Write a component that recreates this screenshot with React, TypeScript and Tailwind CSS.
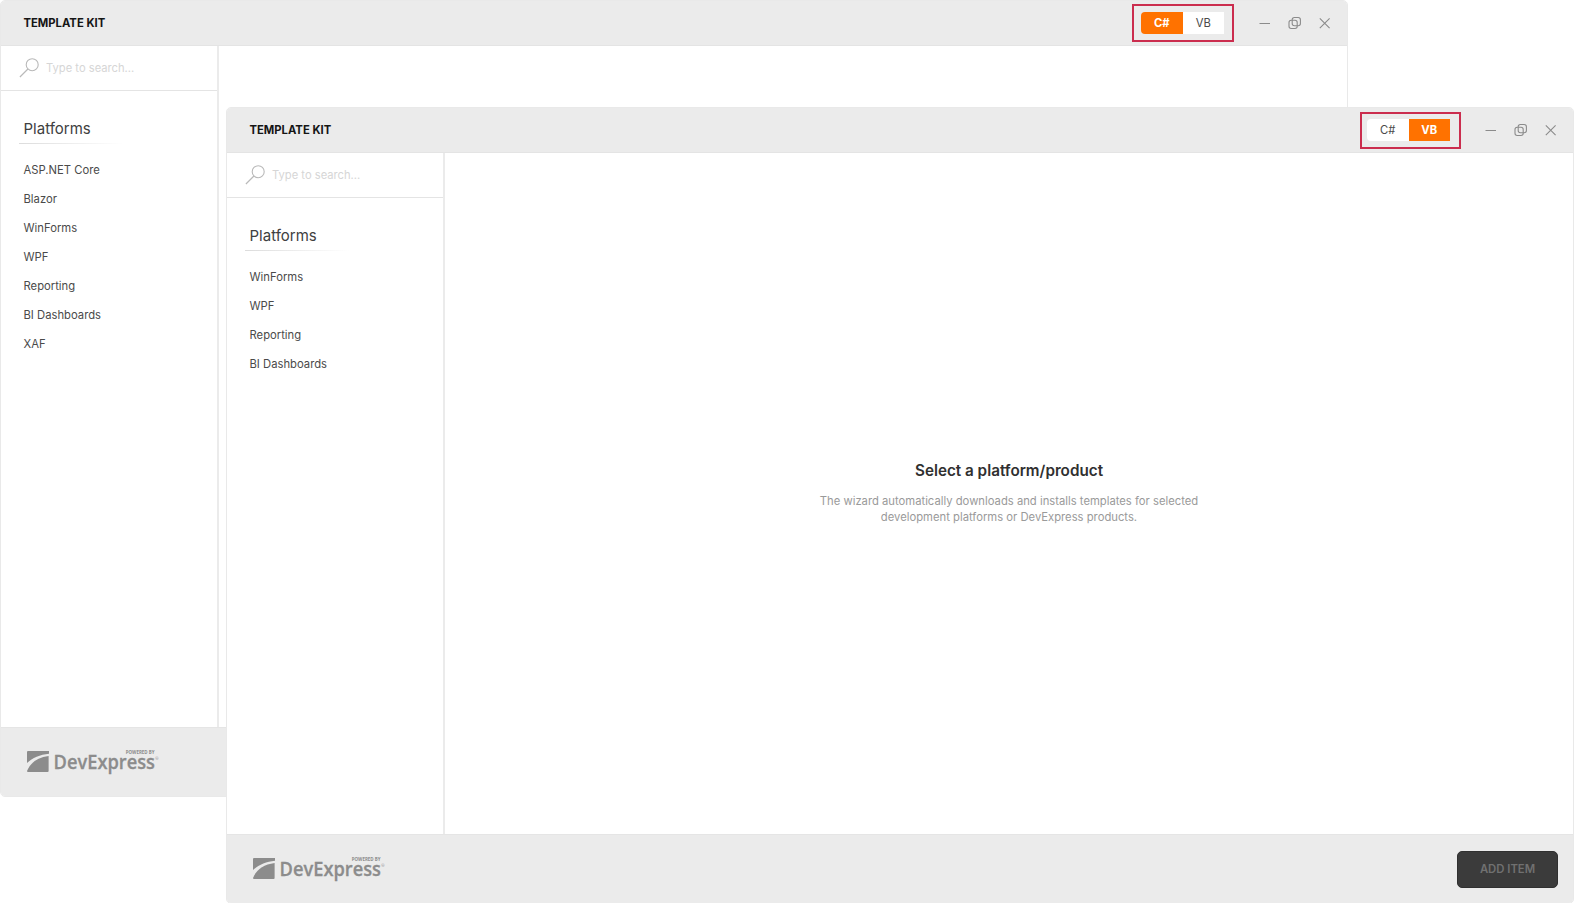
import { useState } from "react";

type Language = "C#" | "VB";

interface TemplateKitProps {
    initialLanguage: Language;
    platforms: string[];
    markClassName: string;
}

const SearchIcon = () => (
    <svg width="20" height="20" viewBox="0 0 20 20" fill="none" stroke="#b9b9b9" strokeWidth="1.1">
        <circle cx="13.2" cy="6.7" r="6" />
        <path d="M8.9 11L0.9 19" />
    </svg>
);

const WindowButtons = () => (
    <svg width="72" height="14" viewBox="0 0 72 14" fill="none" stroke="#8b8b8b" strokeWidth="1.1">
        <path d="M0.5 7.5H11" />
        <rect x="30" y="4.3" width="8.2" height="8.2" rx="2.2" />
        <rect x="33.2" y="1.5" width="8.2" height="8.2" rx="2.2" />
        <path d="M60.8 2.3L70.6 12.1M70.6 2.3L60.8 12.1" />
    </svg>
);

const Logo = () => (
    <svg width="140" height="32" viewBox="0 -3 140 32" fill="#8c8c8c">
        <path d="M1 2H22V4.8C13 5.6 5.5 9 0 14V3Q0 2 1 2Z" />
        <path d="M21.6 7V22Q21.6 23 20.6 23H1Q0 23 0 22C3.5 13.5 10.5 8.5 21.6 7Z" />
        <text x="26.6" y="20" fontFamily="'Open Sans', 'Noto Sans', sans-serif" fontSize="20" fontWeight="600" stroke="#8c8c8c" strokeWidth="0.3" textLength="101.4" lengthAdjust="spacingAndGlyphs">DevExpress</text>
        <text x="98.8" y="5.3" fontFamily="'Open Sans', 'Noto Sans', sans-serif" fontSize="5" fontWeight="700" textLength="28.7" lengthAdjust="spacingAndGlyphs">POWERED BY</text>
        <text x="128.2" y="10.5" fontFamily="'Open Sans', 'Noto Sans', sans-serif" fontSize="4">®</text>
    </svg>
);

const TemplateKit = ({ initialLanguage, platforms, markClassName }: TemplateKitProps) => {
    const [language, setLanguage] = useState<Language>(initialLanguage);

    return (
        <section className="flex h-[797px] w-[1348px] flex-col overflow-hidden rounded-[5px] border border-[#e9e9e9] bg-white">
            <header className="flex h-[45px] shrink-0 items-center border-b border-[#e4e4e4] bg-[#ebebeb] pl-[22.5px] pr-4">
                <h1 className="grow text-[11.25px] font-bold leading-[14px] text-[#151515]">TEMPLATE KIT</h1>
                <div className="relative mr-[35px] flex h-[22px] w-[83px]">
                    {(["C#", "VB"] as Language[]).map((item) => (
                        <button
                            key={item}
                            onClick={() => setLanguage(item)}
                            className={
                                "flex-1 text-[11.25px] leading-[20px] first:rounded-l-[4px] last:rounded-r-[4px] " +
                                (item === language ? "bg-[#ff7200] font-bold text-white" : "bg-white text-[#4a4a4a]")
                            }
                        >
                            {item}
                        </button>
                    ))}
                    <span className={"pointer-events-none absolute border-2 border-[#cb2d4e] " + markClassName} />
                </div>
                <WindowButtons />
            </header>

            <div className="flex min-h-0 grow">
                <aside className="w-[218px] shrink-0 border-r-2 border-[#ebebeb]">
                    <div className="flex h-[45px] items-center gap-[7px] border-b border-[#e4e4e4] pl-[18px]">
                        <SearchIcon />
                        <span className="text-[11.2px] text-[#d6d6d6]">Type to search...</span>
                    </div>
                    <h2 className="ml-[22.5px] mt-[26px] text-[15px] leading-6 text-[#404040]">Platforms</h2>
                    <div className="ml-[18px] mt-[2px] h-px w-[104px] bg-linear-to-r from-[#dcdcdc] to-white" />
                    <ul className="ml-[22.5px] mt-3">
                        {platforms.map((platform) => (
                            <li key={platform} className="h-[29px] text-[11.25px] leading-[29px] text-[#4a4a4a]">{platform}</li>
                        ))}
                    </ul>
                </aside>

                <main className="flex grow flex-col items-center pt-[308px]">
                    <h2 className="text-[15.25px] font-semibold leading-5 text-[#303030]">Select a platform/product</h2>
                    <p className="mt-[13px] w-[420px] text-center text-[11.25px] leading-[15.5px] text-[#9a9a9a]">
                        The wizard automatically downloads and installs templates for selected
                        <br />
                        development platforms or DevExpress products.
                    </p>
                </main>
            </div>

            <footer className="flex h-[69px] shrink-0 items-center justify-between border-t border-[#e5e5e5] bg-[#ebebeb] pl-[26px] pr-[15px]">
                <Logo />
                <button className="h-[37px] w-[101px] rounded-[5px] border border-[#303030] bg-[#3b3b3b] text-[11.3px] font-semibold text-[#707070]">
                    ADD ITEM
                </button>
            </footer>
        </section>
    );
}

export default function App() {
    return (
        <div className="relative h-[903px] w-[1576px] overflow-hidden bg-white font-['Inter',sans-serif]">
            <TemplateKit
                initialLanguage="C#"
                platforms={["ASP.NET Core", "Blazor", "WinForms", "WPF", "Reporting", "BI Dashboards", "XAF"]}
                markClassName="-left-[9px] -top-[8px] h-[38px] w-[102px]"
            />
            {/* second window overlaps the first one */}
            <div className="absolute left-[226px] top-[107px]">
                <TemplateKit
                    initialLanguage="VB"
                    platforms={["WinForms", "WPF", "Reporting", "BI Dashboards"]}
                    markClassName="-left-[7px] -top-[7px] h-[37px] w-[101px]"
                />
            </div>
        </div>
    );
}
